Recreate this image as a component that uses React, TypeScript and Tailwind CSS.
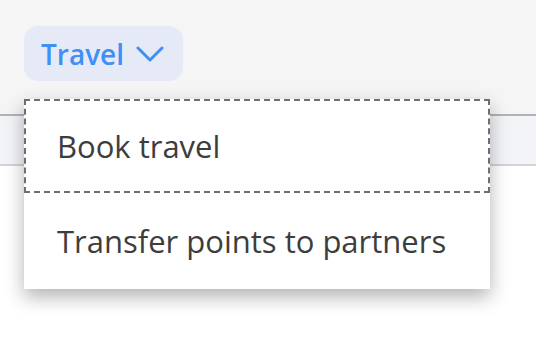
import React from "react";

const menuItems = ["Book travel", "Transfer points to partners"];

const App: React.FC = () => {
  return (
    <div className="relative h-[338px] w-[536px] overflow-hidden bg-white font-['Open_Sans',sans-serif]">
      <div className="h-[114px] bg-[#f5f5f5] pl-6 pt-[26px]">
        <button className="flex h-[55px] w-[159px] items-center gap-3 rounded-[14px] bg-[#e6eaf7] pl-[17px] text-[28px] font-semibold text-[#3f8ff5]">
          Travel
          <svg width="28" height="18" viewBox="0 0 28 18" fill="none">
            <polyline
              points="2,3 14,15 26,3"
              stroke="#3f8ff5"
              strokeWidth="3"
              strokeLinecap="round"
              strokeLinejoin="round"
            />
          </svg>
        </button>
      </div>
      <div className="h-[52px] border-y-2 border-t-[#b3b3b3] border-b-[#d2d4da] bg-[#f3f4f8]" />

      <div className="absolute left-6 top-[99px] w-[466px] bg-white shadow-[0_8px_18px_rgba(0,0,0,0.3)]">
        <div className="flex h-[94px] items-center border-2 border-dashed border-[#6f6f6f] pl-[31px] text-[31px] text-[#3d3d3d]">
          {menuItems[0]}
        </div>
        <div className="flex h-[96px] items-center pl-[33px] text-[31px] text-[#3d3d3d]">
          {menuItems[1]}
        </div>
      </div>
    </div>
  );
};

export default App;
